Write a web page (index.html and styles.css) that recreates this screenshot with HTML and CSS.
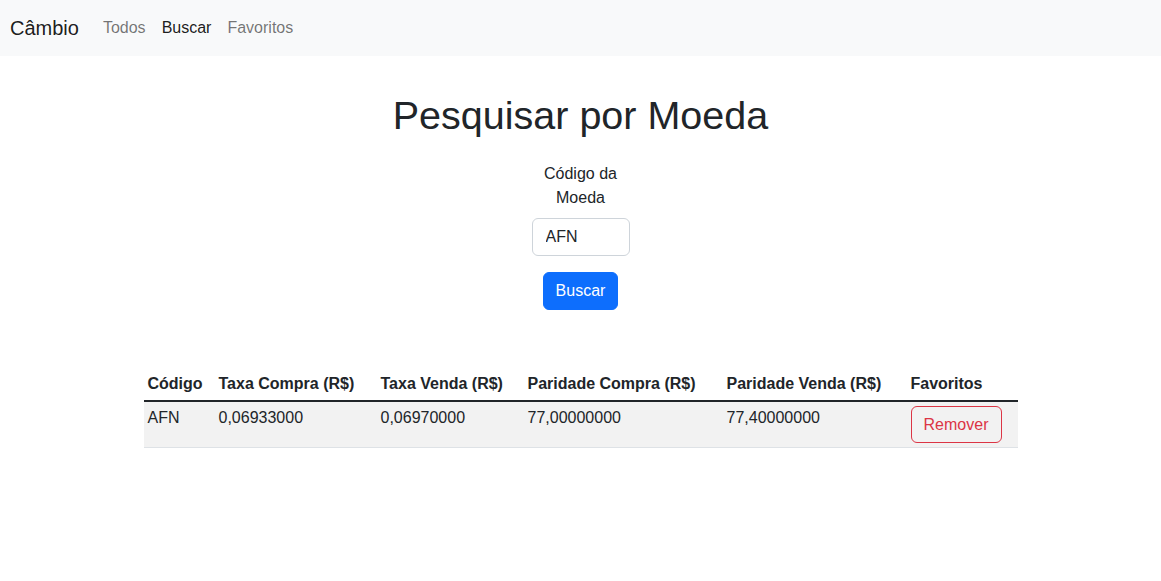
FILE: index.html
```html
<!DOCTYPE html>
<html lang="pt-BR">
<head>
<meta charset="utf-8">
<title>Câmbio</title>
<link rel="stylesheet" href="styles.css">
</head>
<body>
<nav class="navbar">
  <a class="brand" href="#">Câmbio</a>
  <ul class="nav">
    <li><a class="nav-link" href="#">Todos</a></li>
    <li><a class="nav-link active" href="#">Buscar</a></li>
    <li><a class="nav-link" href="#">Favoritos</a></li>
  </ul>
</nav>
<main class="main">
  <h1 class="title">Pesquisar por Moeda</h1>
  <form class="search">
    <label class="label" for="codigo">Código da Moeda</label>
    <input class="input" id="codigo" type="text" value="AFN">
    <button class="btn btn-primary" type="button">Buscar</button>
  </form>
  <table class="table">
    <colgroup>
      <col class="c1"><col class="c2"><col class="c3"><col class="c4"><col class="c5"><col class="c6">
    </colgroup>
    <thead>
      <tr>
        <th>Código</th>
        <th>Taxa Compra (R$)</th>
        <th>Taxa Venda (R$)</th>
        <th>Paridade Compra (R$)</th>
        <th>Paridade Venda (R$)</th>
        <th>Favoritos</th>
      </tr>
    </thead>
    <tbody>
      <tr>
        <td>AFN</td>
        <td>0,06933000</td>
        <td>0,06970000</td>
        <td>77,00000000</td>
        <td>77,40000000</td>
        <td><button class="btn btn-outline-danger" type="button">Remover</button></td>
      </tr>
    </tbody>
  </table>
</main>
</body>
</html>
```
FILE: styles.css
```css
* { box-sizing: border-box; }
body {
  margin: 0;
  font-family: "Liberation Sans", Arial, sans-serif;
  font-size: 16px;
  line-height: 1.5;
  color: #212529;
  background: #fff;
}
.navbar {
  height: 56px;
  background: #f8f9fa;
  display: flex;
  align-items: center;
  padding: 0 10px;
}
.brand {
  font-size: 20px;
  line-height: 30px;
  color: rgba(0,0,0,.9);
  text-decoration: none;
  margin-right: 16px;
}
.nav {
  list-style: none;
  margin: 0;
  padding: 0;
  display: flex;
}
.nav-link {
  display: block;
  padding: 8px;
  color: rgba(0,0,0,.55);
  text-decoration: none;
}
.nav-link.active { color: rgba(0,0,0,.9); }
.main {
  width: 874px;
  margin: 0 auto;
}
.title {
  margin: 35px 0 0;
  font-size: 39.5px;
  font-weight: 400;
  line-height: 48px;
  text-align: center;
}
.search {
  display: flex;
  flex-direction: column;
  align-items: center;
  margin-top: 23px;
}
.label {
  width: 98px;
  text-align: center;
  margin-bottom: 8px;
}
.input {
  width: 98px;
  height: 38px;
  padding: 6px 13px;
  font: inherit;
  color: #212529;
  border: 1px solid #ced4da;
  border-radius: 6px;
  background: #fff;
  margin-bottom: 16px;
}
.btn {
  display: inline-block;
  height: 38px;
  padding: 6px 12px;
  font: inherit;
  line-height: 24px;
  border-radius: 6px;
  border: 1px solid transparent;
  cursor: pointer;
}
.btn-primary {
  background: #0d6efd;
  border-color: #0d6efd;
  color: #fff;
}
.btn-outline-danger {
  background: transparent;
  border-color: #dc3545;
  color: #dc3545;
  width: 91px;
  height: 37px;
}
.table {
  width: 874px;
  margin-top: 57px;
  border-collapse: collapse;
  table-layout: fixed;
}
.c1 { width: 71px; }
.c2 { width: 162px; }
.c3 { width: 147px; }
.c4 { width: 199px; }
.c5 { width: 184px; }
.c6 { width: 111px; }
.table th, .table td {
  padding: 4px;
  text-align: left;
  vertical-align: top;
}
.table th {
  padding-top: 5px;
  font-weight: 700;
  vertical-align: bottom;
  border-bottom: 2px solid #212529;
}
.table tbody tr {
  background: rgba(0,0,0,.05);
  border-bottom: 1px solid #dee2e6;
}
.table tbody td { height: 46px; }
```
